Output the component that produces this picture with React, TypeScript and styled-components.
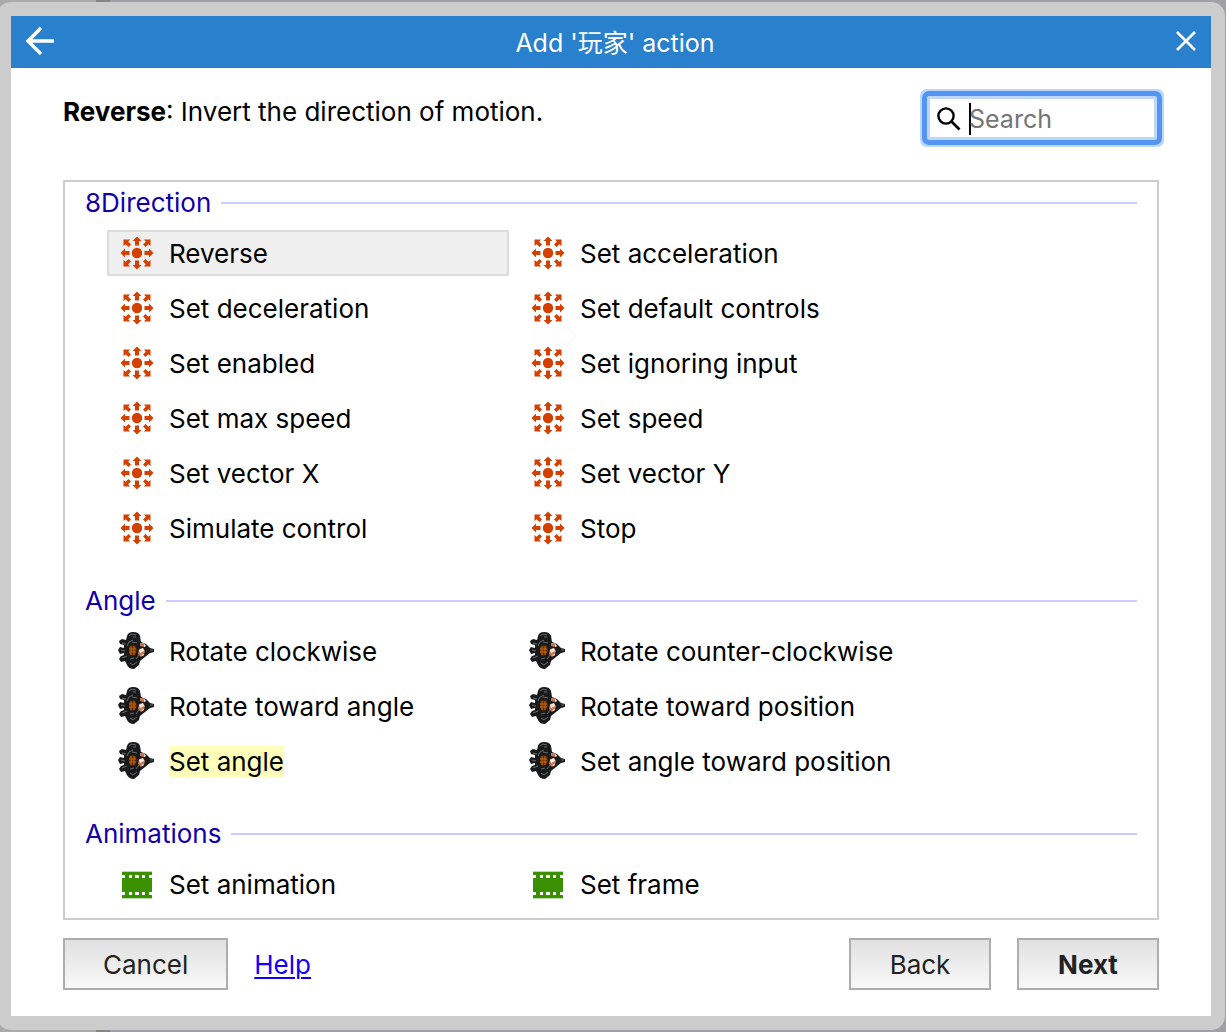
import React, { useState } from 'react';
import styled, { createGlobalStyle } from 'styled-components';

const GlobalStyle = createGlobalStyle`
  *, *::before, *::after { box-sizing: border-box; }
  body {
    margin: 0;
    background: #a09fa5;
    color: #000;
    font-family: Inter, "Noto Sans CJK SC", sans-serif;
    font-size: 26px;
    line-height: 32px;
  }
  button, input { font: inherit; color: inherit; }
`;

const Backdrop = styled.div`
  min-height: 100vh;
  display: flex;
  padding: 2px 1px 2px 0;
  overflow: hidden;
  background: linear-gradient(90deg, #aaa 0 96px, #858585 96px 110px, #a09fa5 110px);
`;

const Frame = styled.div`
  flex: 1;
  display: flex;
  margin-left: -3px;
  padding: 14px;
  border-radius: 14px;
  background: #ccc;
`;

const Dialog = styled.main`
  flex: 1;
  min-width: 0;
  display: flex;
  flex-direction: column;
  background: #fff;
`;

const TitleBar = styled.header`
  display: flex;
  align-items: center;
  height: 52px;
  background: #2980cc;
  color: #fff;
`;

const Title = styled.h1`
  flex: 1;
  margin: 0;
  padding-top: 2px;
  font-size: 25px;
  font-weight: 400;
  text-align: center;
`;

const BarButton = styled.button<{ $width: number }>`
  display: flex;
  align-items: center;
  justify-content: center;
  width: ${(p) => p.$width}px;
  height: 52px;
  padding: 0 0 2px;
  border: 0;
  background: none;
`;

const Content = styled.div`
  flex: 1;
  display: flex;
  flex-direction: column;
  padding: 28px 52px 26px;
`;

const Top = styled.div`
  display: flex;
  justify-content: space-between;
  align-items: flex-start;
  gap: 24px;
  height: 84px;
`;

const Description = styled.p`
  margin: 0;
`;

const SearchBox = styled.label`
  display: flex;
  align-items: center;
  gap: 8px;
  width: 230px;
  height: 44px;
  margin-right: 2px;
  padding: 1px 7px 0;
  border: 3px solid #bdd7fc;
  background: #fff;
  outline: 5px solid #5594f0;
  box-shadow: 0 0 0 7px #bdd7fc;
  border-radius: 2px;
`;

const SearchInput = styled.input`
  flex: 1;
  min-width: 0;
  height: 32px;
  padding: 0;
  border: 0;
  outline: 0;
  background: none;
  font-size: 25px;
  &::placeholder { color: #757575; opacity: 1; }
`;

const Caret = styled.span`
  width: 2px;
  height: 32px;
  margin-right: -10px;
  background: #000;
`;

const List = styled.div`
  flex: 1;
  display: flex;
  flex-direction: column;
  gap: 34px;
  padding: 5px 20px 11px;
  border: 2px solid #ccc;
`;

const Section = styled.section`
  display: flex;
  flex-direction: column;
  gap: 11px;
`;

const SectionTitle = styled.h2`
  display: flex;
  align-items: center;
  gap: 10px;
  margin: 0;
  color: #10a;
  font-size: 26px;
  font-weight: 400;
  &::after {
    content: "";
    flex: 1;
    height: 2px;
    background: #ccf;
  }
`;

const Grid = styled.div`
  display: grid;
  grid-template-columns: repeat(auto-fill, 402px);
  gap: 9px;
  padding-left: 22px;
`;

const Item = styled.button<{ $selected: boolean }>`
  display: flex;
  align-items: center;
  gap: 14px;
  height: 46px;
  padding: 1px 10px 0;
  border: 2px solid ${(p) => (p.$selected ? '#dcdcdc' : 'transparent')};
  background: ${(p) => (p.$selected ? '#efefef' : 'none')};
  text-align: left;
  white-space: nowrap;
  & > svg { flex: none; overflow: visible; }
`;

const ItemLabel = styled.span<{ $marked: boolean }>`
  background: ${(p) => (p.$marked ? '#ffffb9' : 'none')};
`;

const Footer = styled.footer`
  display: flex;
  align-items: center;
  gap: 26px;
  padding-top: 18px;
`;

const PushButton = styled.button<{ $primary?: boolean }>`
  min-width: 142px;
  height: 52px;
  padding: 2px 38px 0;
  border: 2px solid #adadad;
  background: linear-gradient(#e1e1e1, #f8f8f8);
  color: #222;
  font-weight: ${(p) => (p.$primary ? 700 : 400)};
`;

const HelpLink = styled.a`
  flex: 1;
  padding-top: 2px;
  color: #10f;
  text-underline-offset: 3px;
  text-decoration-thickness: 2px;
`;

const arrow = 'M0-16.5 4.5-12H2v4.5h-4V-12h-2.5z';
const corner = 'M13.5-13.5V-7l-2.2-1.8-2.8 2.8-2.5-2.5 2.8-2.8L7-13.5z';

const DirectionIcon = () => (
  <svg width="36" height="36" viewBox="-18 -17 36 36" fill="#d34000" aria-hidden="true">
    <circle r="5.2" />
    {[0, 90, 180, 270].map((a) => (
      <g key={a} transform={`rotate(${a})`}>
        <path d={arrow} />
        <path d={corner} />
      </g>
    ))}
  </svg>
);

const PlayerIcon = () => (
  <svg width="36" height="36" viewBox="0 2 36 36" aria-hidden="true">
    <path
      d="M8 4q1-4 6-4 6 0 7 4l1 6 5 2 4 4 4 1v3l-4 1-5 4-5 4-1 4-5 4q-5 0-7-4l-2-4-4 1-2-3 2-3 3-1v-2l-4 1-2-4 2-3 4 1v-3l-4-1-1-3 3-2 4 1z"
      fill="#17191a"
    />
    <path
      d="m10 4 3-2 4 1M14 5h3M3 11l4 1M2 18l4 1M3 26l5-2M11 31l3 2 4-3M8 14l2-4 4-2M13 10l5 1M17 27l3-4M11 27l4-1M31 18h3"
      fill="none"
      stroke="#666c6d"
      strokeWidth="1"
    />
    <path d="M10 15 13 13l4 1 1 5-2 4-4 1-2-3z" fill="#5a2b05" />
    <path d="M12 14v9M15 14v9M10 17h7M10 20h7" stroke="#c8660c" strokeWidth="1" />
    <path d="m21 11 4 0 2 3-2 1-4-1zM20 17l4-1 2 3-1 4-3 2-3-3z" fill="#c27a56" />
    <path d="m20 18 4-2 1 3-4 2zM25 12l2 2-2 1zM22 23l3-1-1 2z" fill="#ffece0" />
  </svg>
);

const FilmIcon = () => (
  <svg width="36" height="36" viewBox="0 0 36 36" aria-hidden="true">
    <path d="M3 4h30v28H3z" fill="#399000" />
    <path d="M3 4.5h30M3 31.5h30" stroke="#b8dca8" />
    <path
      d="M3 8h3v3H3zM10 8h3v3h-3zM16 8h4v3h-4zM23 8h3v3h-3zM30 8h3v3h-3zM3 25h3v3H3zM10 25h3v3h-3zM16 25h4v3h-4zM23 25h3v3h-3zM30 25h3v3h-3z"
      fill="#fff"
    />
  </svg>
);

const sections = [
  {
    title: '8Direction',
    Icon: DirectionIcon,
    items: [
      'Reverse', 'Set acceleration', 'Set deceleration', 'Set default controls',
      'Set enabled', 'Set ignoring input', 'Set max speed', 'Set speed',
      'Set vector X', 'Set vector Y', 'Simulate control', 'Stop',
    ],
  },
  {
    title: 'Angle',
    Icon: PlayerIcon,
    items: [
      'Rotate clockwise', 'Rotate counter-clockwise', 'Rotate toward angle',
      'Rotate toward position', 'Set angle', 'Set angle toward position',
    ],
  },
  { title: 'Animations', Icon: FilmIcon, items: ['Set animation', 'Set frame'] },
];

export default function App() {
  const [selected, setSelected] = useState('Reverse');
  const [query, setQuery] = useState('');
  return (
    <>
      <GlobalStyle />
      <Backdrop>
        <Frame>
          <Dialog>
            <TitleBar>
              <BarButton $width={58} aria-label="Go back">
                <svg width="30" height="30" viewBox="0 0 30 30" fill="none" stroke="#fff" strokeWidth="3.4" aria-hidden="true">
                  <path d="M29 15H4M16 2 3 15l13 13" />
                </svg>
              </BarButton>
              <Title>Add '玩家' action</Title>
              <BarButton $width={50} aria-label="Close">
                <svg width="20" height="20" viewBox="0 0 20 20" stroke="#fff" strokeWidth="2.6" aria-hidden="true">
                  <path d="m1 1 18 18M19 1 1 19" />
                </svg>
              </BarButton>
            </TitleBar>
            <Content>
              <Top>
                <Description><b>Reverse</b>: Invert the direction of motion.</Description>
                <SearchBox>
                  <svg width="24" height="24" viewBox="0 0 24 24" fill="none" stroke="#000" aria-hidden="true">
                    <circle cx="9" cy="9" r="7.6" strokeWidth="2.4" />
                    <path d="m14.5 14.5 8 8" strokeWidth="2.6" />
                  </svg>
                  <Caret />
                  <SearchInput
                    type="text"
                    placeholder="Search"
                    aria-label="Search"
                    value={query}
                    onChange={(e) => setQuery(e.target.value)}
                  />
                </SearchBox>
              </Top>
              <List>
                {sections.map(({ title, Icon, items }) => (
                  <Section key={title}>
                    <SectionTitle>{title}</SectionTitle>
                    <Grid>
                      {items.map((name) => (
                        <Item key={name} $selected={name === selected} onClick={() => setSelected(name)}>
                          <Icon />
                          <ItemLabel $marked={name === 'Set angle'}>{name}</ItemLabel>
                        </Item>
                      ))}
                    </Grid>
                  </Section>
                ))}
              </List>
              <Footer>
                <PushButton>Cancel</PushButton>
                <HelpLink href="#help">Help</HelpLink>
                <PushButton>Back</PushButton>
                <PushButton $primary>Next</PushButton>
              </Footer>
            </Content>
          </Dialog>
        </Frame>
      </Backdrop>
    </>
  );
}
